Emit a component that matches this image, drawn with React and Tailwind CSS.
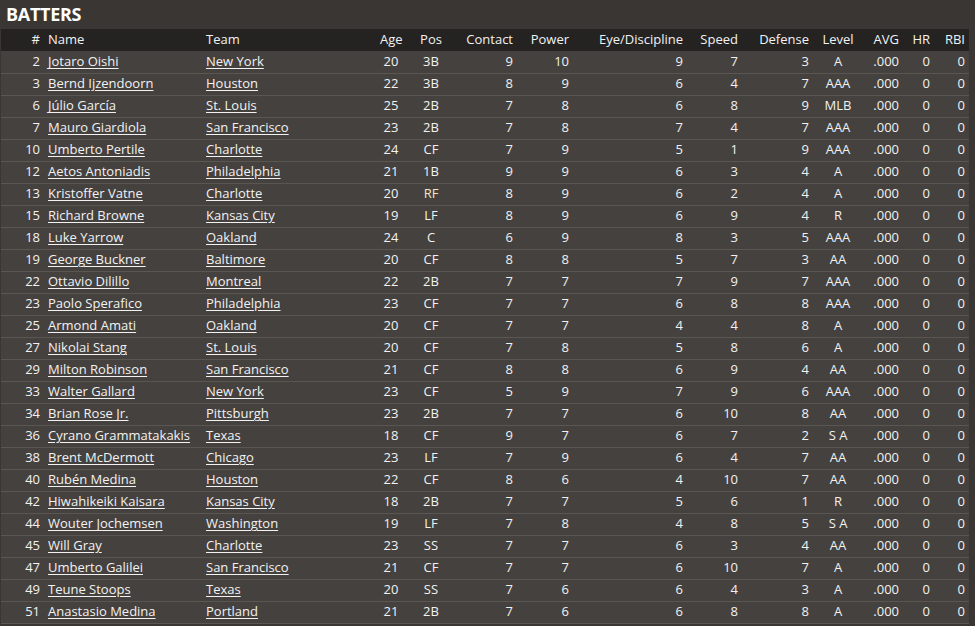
import React from 'react';

const rows = [
  [2, 'Jotaro Oishi', 'New York', 20, '3B', 9, 10, 9, 7, 3, 'A'],
  [3, 'Bernd Ijzendoorn', 'Houston', 22, '3B', 8, 9, 6, 4, 7, 'AAA'],
  [6, 'Júlio García', 'St. Louis', 25, '2B', 7, 8, 6, 8, 9, 'MLB'],
  [7, 'Mauro Giardiola', 'San Francisco', 23, '2B', 7, 8, 7, 4, 7, 'AAA'],
  [10, 'Umberto Pertile', 'Charlotte', 24, 'CF', 7, 9, 5, 1, 9, 'AAA'],
  [12, 'Aetos Antoniadis', 'Philadelphia', 21, '1B', 9, 9, 6, 3, 4, 'A'],
  [13, 'Kristoffer Vatne', 'Charlotte', 20, 'RF', 8, 9, 6, 2, 4, 'A'],
  [15, 'Richard Browne', 'Kansas City', 19, 'LF', 8, 9, 6, 9, 4, 'R'],
  [18, 'Luke Yarrow', 'Oakland', 24, 'C', 6, 9, 8, 3, 5, 'AAA'],
  [19, 'George Buckner', 'Baltimore', 20, 'CF', 8, 8, 5, 7, 3, 'AA'],
  [22, 'Ottavio Dilillo', 'Montreal', 22, '2B', 7, 7, 7, 9, 7, 'AAA'],
  [23, 'Paolo Sperafico', 'Philadelphia', 23, 'CF', 7, 7, 6, 8, 8, 'AAA'],
  [25, 'Armond Amati', 'Oakland', 20, 'CF', 7, 7, 4, 4, 8, 'A'],
  [27, 'Nikolai Stang', 'St. Louis', 20, 'CF', 7, 8, 5, 8, 6, 'A'],
  [29, 'Milton Robinson', 'San Francisco', 21, 'CF', 8, 8, 6, 9, 4, 'AA'],
  [33, 'Walter Gallard', 'New York', 23, 'CF', 5, 9, 7, 9, 6, 'AAA'],
  [34, 'Brian Rose Jr.', 'Pittsburgh', 23, '2B', 7, 7, 6, 10, 8, 'AA'],
  [36, 'Cyrano Grammatakakis', 'Texas', 18, 'CF', 9, 7, 6, 7, 2, 'S A'],
  [38, 'Brent McDermott', 'Chicago', 23, 'LF', 7, 9, 6, 4, 7, 'AA'],
  [40, 'Rubén Medina', 'Houston', 22, 'CF', 8, 6, 4, 10, 7, 'AA'],
  [42, 'Hiwahikeiki Kaisara', 'Kansas City', 18, '2B', 7, 7, 5, 6, 1, 'R'],
  [44, 'Wouter Jochemsen', 'Washington', 19, 'LF', 7, 8, 4, 8, 5, 'S A'],
  [45, 'Will Gray', 'Charlotte', 23, 'SS', 7, 7, 6, 3, 4, 'AA'],
  [47, 'Umberto Galilei', 'San Francisco', 21, 'CF', 7, 7, 6, 10, 7, 'A'],
  [49, 'Teune Stoops', 'Texas', 20, 'SS', 7, 6, 6, 4, 3, 'A'],
  [51, 'Anastasio Medina', 'Portland', 21, '2B', 7, 6, 6, 8, 8, 'A'],
];

const widths = [43, 158, 174, 30, 50, 61, 56, 114, 55, 71, 50, 40, 31, 35];

export default function App() {
  return (
    <div className="w-[975px] h-[626px] overflow-hidden bg-[#3a3633] text-[#f2f2f2] text-[13px]" style={{ fontFamily: '"Open Sans", "Noto Sans", sans-serif' }}>
      <h1 className="h-[29px] pl-[6px] pt-[2px] text-[18px] font-bold leading-[24px] tracking-[-0.3px] text-white">BATTERS</h1>
      <table className="ml-px w-[968px] table-fixed border-collapse">
        <colgroup>
          {widths.map((w, i) => (
            <col key={i} style={{ width: w }} />
          ))}
        </colgroup>
        <thead>
          <tr className="h-[22px] bg-[#242322]">
            <th className="px-1 text-right font-normal">#</th>
            <th className="px-1 text-left font-normal">Name</th>
            <th className="px-1 text-left font-normal">Team</th>
            <th className="px-1 text-center font-normal">Age</th>
            <th className="px-1 text-center font-normal">Pos</th>
            <th className="px-1 text-right font-normal">Contact</th>
            <th className="px-1 text-right font-normal">Power</th>
            <th className="px-1 text-right font-normal">Eye/Discipline</th>
            <th className="px-1 text-right font-normal">Speed</th>
            <th className="px-1 text-right font-normal">Defense</th>
            <th className="px-1 text-center font-normal">Level</th>
            <th className="px-1 text-right font-normal">AVG</th>
            <th className="px-1 text-right font-normal">HR</th>
            <th className="px-1 text-right font-normal">RBI</th>
          </tr>
        </thead>
        <tbody>
          {rows.map((r) => (
            <tr key={r[0]} className="h-[22px] bg-[#45413e] border-b border-[#5a5652]">
              <td className="px-1 text-right">{r[0]}</td>
              <td className="px-1 whitespace-nowrap"><a href="#" className="underline underline-offset-2">{r[1]}</a></td>
              <td className="px-1 whitespace-nowrap"><a href="#" className="underline underline-offset-2">{r[2]}</a></td>
              <td className="px-1 text-center">{r[3]}</td>
              <td className={r[4] === 'RF' ? 'px-1 text-center text-[#f0e6c8]' : 'px-1 text-center'}>{r[4]}</td>
              <td className="px-1 text-right">{r[5]}</td>
              <td className="px-1 text-right">{r[6]}</td>
              <td className="px-1 text-right">{r[7]}</td>
              <td className="px-1 text-right">{r[8]}</td>
              <td className="px-1 text-right">{r[9]}</td>
              <td className="px-1 text-center">{r[10]}</td>
              <td className="px-1 text-right">.000</td>
              <td className="px-1 text-right">0</td>
              <td className="px-1 text-right">0</td>
            </tr>
          ))}
        </tbody>
      </table>
    </div>
  );
}
